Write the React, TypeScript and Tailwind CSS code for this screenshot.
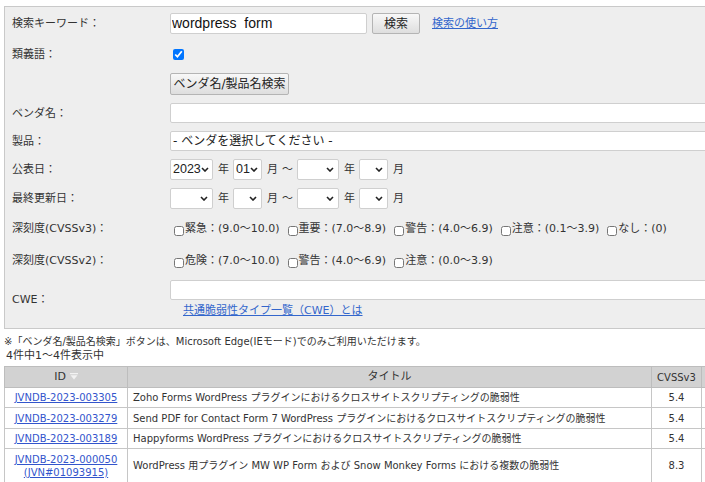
import React from 'react'

// JVN iPedia 風の検索フォーム + 結果一覧

const FONT = "font-['DejaVu_Sans','Noto_Sans_CJK_JP',sans-serif]"

function Chevron() {
  return (
    <svg width="8" height="5" viewBox="0 0 8 5" className="shrink-0">
      <path d="M1 1l3 3 3-3" fill="none" stroke="#222" strokeWidth="1.6" />
    </svg>
  )
}

function FakeSelect({ value = '', className }: { value?: string; className: string }) {
  return (
    <span
      className={`${className} h-[21px] bg-white border border-[#cfcfcf] rounded-[2px] flex items-center justify-between pl-[2px] pr-[4px] text-[12.5px] leading-none text-[#222] font-['Liberation_Sans',sans-serif]`}
    >
      <span>{value}</span>
      <Chevron />
    </span>
  )
}

function Row({ label, h, children }: { label: string; h: string; children: React.ReactNode }) {
  return (
    <div className={`flex items-center ${h}`}>
      <div className="w-[165px] shrink-0 pl-[7px] text-[11px] leading-none text-[#333]">{label}</div>
      <div className="flex-1 flex items-center min-w-0">{children}</div>
    </div>
  )
}

function Check({ label }: { label: string }) {
  return (
    <label className="flex items-center mr-[4px]">
      <input type="checkbox" className="w-[10px] h-[10px] mt-[5px] ml-[4px] mr-[1px]" />
      <span className="text-[11px] leading-none text-[#333]">{label}</span>
    </label>
  )
}

const Unit = ({ t, className = '' }: { t: string; className?: string }) => (
  <span className={`text-[11px] leading-none text-[#333] ${className}`}>{t}</span>
)

const rows = [
  { id: 'JVNDB-2023-003305', title: 'Zoho Forms WordPress プラグインにおけるクロスサイトスクリプティングの脆弱性', score: '5.4' },
  { id: 'JVNDB-2023-003279', title: 'Send PDF for Contact Form 7 WordPress プラグインにおけるクロスサイトスクリプティングの脆弱性', score: '5.4' },
  { id: 'JVNDB-2023-003189', title: 'Happyforms WordPress プラグインにおけるクロスサイトスクリプティングの脆弱性', score: '5.4' },
]

function SortIcon() {
  return (
    <svg width="8" height="7" viewBox="0 0 8 7" className="inline-block ml-[4px] mb-[1px]">
      <rect x="0" y="0" width="8" height="1.2" fill="#f2f2f2" />
      <path d="M0.5 2.2h7L4 6.5z" fill="#f2f2f2" />
    </svg>
  )
}

export default function App() {
  return (
    <div className={`w-[705px] h-[482px] overflow-hidden bg-white text-[#333] ${FONT}`}>
      <div className="pt-[6px] pl-[4px]">
        {/* 検索パネル */}
        <div className="w-[760px] bg-[#eeeeee] border border-[#c9c9c9] pb-[6px]">
          <Row label="検索キーワード：" h="h-[33px]">
            <input
              defaultValue="wordpress  form"
              className="w-[197px] h-[21px] bg-white border border-[#cfcfcf] rounded-[2px] px-[1px] text-[14px] text-[#111] font-['Liberation_Sans',sans-serif] outline-none"
            />
            <button className="ml-[5px] w-[48px] h-[21px] border border-[#b4b4b4] rounded-[2px] bg-gradient-to-b from-[#f8f8f8] to-[#dedede] text-[12px] leading-none text-[#222]">
              検索
            </button>
            <a className="ml-[12px] text-[11px] leading-none text-[#3366cc] underline">検索の使い方</a>
          </Row>

          <Row label="類義語：" h="h-[28px]">
            <input type="checkbox" defaultChecked className="ml-[3px] w-[11px] h-[11px]" />
          </Row>

          <Row label="" h="h-[31px]">
            <button className="w-[119px] h-[22px] border border-[#b4b4b4] rounded-[2px] bg-gradient-to-b from-[#f8f8f8] to-[#dedede] text-[12px] leading-none text-[#222]">
              ベンダ名/製品名検索
            </button>
          </Row>

          <Row label="ベンダ名：" h="h-[28px]">
            <div className="w-full h-[20px] bg-white border border-[#cfcfcf] rounded-[2px]" />
          </Row>

          <Row label="製品：" h="h-[28px]">
            <div className="w-full h-[20px] bg-white border border-[#cfcfcf] rounded-[2px] flex items-center pl-[2px] text-[12px] leading-none text-[#222]">
              - ベンダを選択してください -
            </div>
          </Row>

          <Row label="公表日：" h="h-[29px]">
            <FakeSelect value="2023" className="w-[43px]" />
            <Unit t="年" className="ml-[5px]" />
            <FakeSelect value="01" className="w-[29px] ml-[4px]" />
            <Unit t="月" className="ml-[5px]" />
            <Unit t="～" className="ml-[4px]" />
            <FakeSelect className="w-[42px] ml-[4px]" />
            <Unit t="年" className="ml-[5px]" />
            <FakeSelect className="w-[29px] ml-[4px]" />
            <Unit t="月" className="ml-[5px]" />
          </Row>

          <Row label="最終更新日：" h="h-[28px]">
            <FakeSelect className="w-[43px]" />
            <Unit t="年" className="ml-[5px]" />
            <FakeSelect className="w-[29px] ml-[4px]" />
            <Unit t="月" className="ml-[5px]" />
            <Unit t="～" className="ml-[4px]" />
            <FakeSelect className="w-[42px] ml-[4px]" />
            <Unit t="年" className="ml-[5px]" />
            <FakeSelect className="w-[29px] ml-[4px]" />
            <Unit t="月" className="ml-[5px]" />
          </Row>

          <Row label="深刻度(CVSSv3)：" h="h-[32px]">
            <Check label="緊急：(9.0～10.0)" />
            <Check label="重要：(7.0～8.9)" />
            <Check label="警告：(4.0～6.9)" />
            <Check label="注意：(0.1～3.9)" />
            <Check label="なし：(0)" />
          </Row>

          <Row label="深刻度(CVSSv2)：" h="h-[32px]">
            <Check label="危険：(7.0～10.0)" />
            <Check label="警告：(4.0～6.9)" />
            <Check label="注意：(0.0～3.9)" />
          </Row>

          <Row label="CWE：" h="h-[46px]">
            <div className="w-full flex flex-col">
              <div className="w-full h-[20px] bg-white border border-[#cfcfcf] rounded-[2px]" />
              <a className="mt-[4px] ml-[13px] text-[11px] leading-[14px] text-[#3366cc] underline">
                共通脆弱性タイプ一覧（CWE）とは
              </a>
            </div>
          </Row>
        </div>

        <p className="mt-[6px] text-[10px] leading-[14px] text-[#333]">
          ※「ベンダ名/製品名検索」ボタンは、Microsoft Edge(IEモード)でのみご利用いただけます。
        </p>
        <p className="pl-[2px] text-[11px] leading-[14px] text-[#333]">4件中1～4件表示中</p>

        {/* 結果テーブル */}
        <table className="mt-[3px] w-[757px] border-collapse table-fixed text-[10px] text-[#333]">
          <colgroup>
            <col className="w-[123px]" />
            <col className="w-[524px]" />
            <col className="w-[50px]" />
            <col className="w-[60px]" />
          </colgroup>
          <thead>
            <tr className="h-[21px] bg-[#d2d2d2]">
              <th className="border border-[#bdbdbd] font-normal text-[11px]">
                ID<SortIcon />
              </th>
              <th className="border border-[#bdbdbd] font-normal text-[11px]">タイトル</th>
              <th className="border border-[#bdbdbd] font-normal text-[10px]">CVSSv3</th>
              <th className="border border-[#bdbdbd] font-normal" />
            </tr>
          </thead>
          <tbody>
            {rows.map((r, i) => (
              <tr key={r.id} className={i === 1 ? 'h-[21px] bg-white' : 'h-[20px] bg-white'}>
                <td className="border border-[#c6c6c6] text-center">
                  <a className="text-[#3355cc] underline">{r.id}</a>
                </td>
                <td className="border border-[#c6c6c6] pl-[5px] whitespace-nowrap">{r.title}</td>
                <td className="border border-[#c6c6c6] text-center">{r.score}</td>
                <td className="border border-[#c6c6c6]" />
              </tr>
            ))}
            <tr className="h-[34px] bg-white">
              <td className="border border-[#c6c6c6] text-center leading-[13px]">
                <a className="text-[#3355cc] underline">JVNDB-2023-000050</a>
                <br />
                <a className="text-[#3355cc] underline">(JVN#01093915)</a>
              </td>
              <td className="border border-[#c6c6c6] pl-[5px] whitespace-nowrap">
                WordPress 用プラグイン MW WP Form および Snow Monkey Forms における複数の脆弱性
              </td>
              <td className="border border-[#c6c6c6] text-center">8.3</td>
              <td className="border border-[#c6c6c6]" />
            </tr>
          </tbody>
        </table>
      </div>
    </div>
  )
}
